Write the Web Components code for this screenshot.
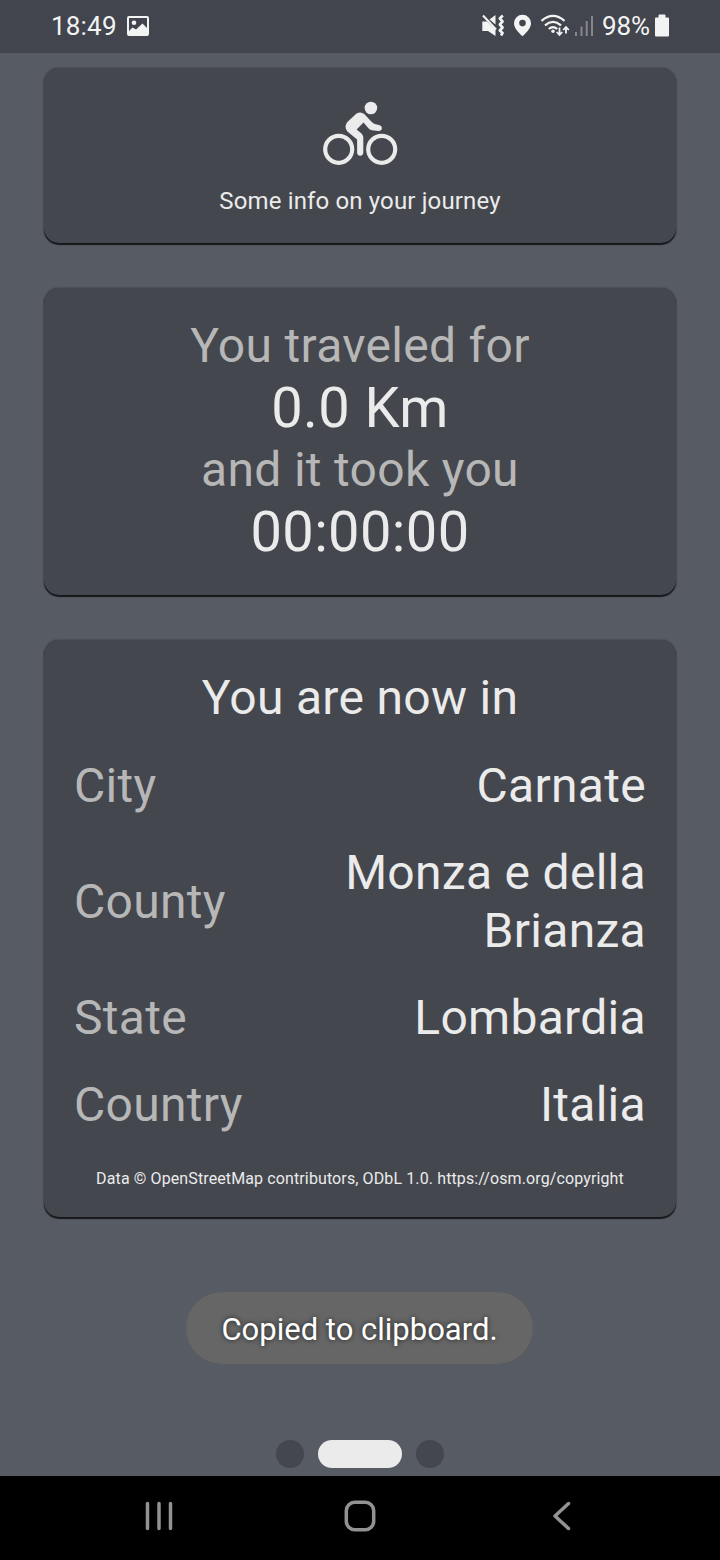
<!DOCTYPE html>
<html lang="en">
<head>
<meta charset="utf-8">
<title>Journey</title>
<style>
html,body{margin:0;height:100%;background:#575b63}
body{font-family:Roboto,sans-serif;color:#ebebeb}
</style>
</head>
<body>
<journey-app></journey-app>
<script>
const define = (name, html) => {
  const t = document.createElement('template');
  t.innerHTML = html;
  customElements.define(name, class extends HTMLElement {
    constructor() {
      super();
      this.attachShadow({mode: 'open'}).appendChild(t.content.cloneNode(true));
    }
  });
};

define('status-bar', `<style>
:host{display:flex;height:53px;background:#42454d;color:#f2f4f3;flex:none;box-sizing:border-box;padding:0 51px 0 51px;justify-content:space-between;font-size:26px;line-height:52px}
div{display:flex}
svg{display:block;flex:none}
.time{letter-spacing:.2px;width:76px}
.pct{font-size:26px;letter-spacing:-.1px;width:53px;margin-left:8px;white-space:nowrap}
</style>
<div><span class="time">18:49</span>
<svg width="23" height="53" viewBox="127 0 23 53" fill="#f2f4f3"><path fill-rule="evenodd" d="M129 16H147a2 2 0 0 1 2 2V34a2 2 0 0 1-2 2H129a2 2 0 0 1-2-2V18a2 2 0 0 1 2-2ZM129 18V31l3.500-3.500 3.500 2 6.500-6L147 28V18Z"/><circle cx="134" cy="22.800" r="2.300"/></svg></div>
<div>
<svg width="113" height="53" viewBox="481 0 113 53" fill="none" stroke="#f2f4f3">
<path fill="#f2f4f3" stroke="none" d="M482.300 21.500H487L495.500 30V36L488 31H482.300ZM495.500 15V24.500L489.500 19.500Z"/>
<path stroke-width="2" d="M483 15.500 496 29.500"/>
<path stroke-width="2.600" stroke-linejoin="round" d="M502.800 15.500 499.800 18.500 502.600 21.500 499.800 24.500 502.600 27.500 499.800 30.500 502.600 33 501 35.500"/>
<path fill="#f2f4f3" stroke="none" fill-rule="evenodd" d="M522.500 14.800a8.500 8.500 0 0 1 8.500 8.500c0 4.500-3.800 8.800-8.500 13-4.700-4.200-8.500-8.500-8.500-13a8.500 8.500 0 0 1 8.500-8.500Zm0 5a3.300 3.300 0 1 0 0 6.600 3.300 3.300 0 0 0 0-6.600Z"/>
<path stroke-width="2.300" d="M541.500 20.800Q553 11 564.500 20.800M545 25.300Q553 18.500 561 25.300M548.800 29Q553 25.300 557.200 29"/>
<circle cx="553" cy="31.300" r="1.700" fill="#f2f4f3" stroke="none"/>
<path stroke-width="1.800" d="M559.500 27.500V34.800M556.800 32l2.700 3 2.700-3M566 33.500V27.300M563.200 30l2.800-3 2.800 3"/>
<path stroke="#85878b" stroke-width="2" d="M576 32V36M581.500 26.500V36M586.700 21V36M592 16V36"/>
</svg><span class="pct">98%</span>
<svg width="14" height="53" viewBox="655 0 14 53" fill="#f2f4f3"><path d="M655 18.500a1 1 0 0 1 1-1H658.500V15.500a1 1 0 0 1 1-1H664.500a1 1 0 0 1 1 1V17.500H668a1 1 0 0 1 1 1V35.500a1 1 0 0 1-1 1H656a1 1 0 0 1-1-1Z"/></svg></div>`);

define('info-card', `<style>
:host{display:flex;flex-direction:column;box-sizing:border-box;flex:none;background:#44474e;border-radius:15px;box-shadow:0 1.500px 1px #15171a,0 0 2px #303338;padding:29px 30px 28px}
</style><slot></slot>`);

define('bike-icon', `<style>:host{display:block;width:76px;height:66px;align-self:center}svg{display:block}</style>
<svg width="76" height="66" viewBox="22 10 76 66" fill="#ebebeb"><g fill="none" stroke="#ebebeb" stroke-width="4.200"><circle cx="38.700" cy="59.300" r="13.500"/><circle cx="81.700" cy="59.300" r="13.500"/></g><circle cx="70.900" cy="18" r="6.300"/>
<path d="M56.500 23.600Q60.500 21 64.500 24.200L71.500 31.800Q73 33.800 75.500 34.200L79.300 34.900Q82 35.600 82 38.100Q81.600 41.100 78.500 41.100L72 40.300Q69.500 39.800 68 37.800L63.500 32.400L56.600 39.600L61.500 43.500Q63.300 45.500 63.300 48V62.600Q63.300 65.700 60.200 65.700Q57.100 65.700 57.100 62.600V49.500L47.400 41.400Q45.400 39.500 45.500 36.500Q45.700 34 47.400 32Z"/></svg>`);

define('place-row', `<style>
:host{display:flex;align-items:center;justify-content:space-between;padding:14.500px 0;font-size:48px;line-height:58px;letter-spacing:.3px}
.k{color:#b7b7b7}.v{text-align:right;width:310px}
</style><span class="k"><slot name="label"></slot></span><span class="v"><slot></slot></span>`);

define('toast-message', `<style>
:host{display:block;position:absolute;left:186px;top:1292px;width:347px;height:72px;border-radius:36px;background:#656665;color:#fff;font-size:31px;line-height:75px;text-align:center;text-shadow:0 0 5px rgba(0,0,0,.7);white-space:nowrap}
</style><slot></slot>`);

define('page-dots', `<style>
:host{display:flex;gap:14px;justify-content:center;margin-top:auto;padding-bottom:8px}
i{width:28px;height:28px;border-radius:14px;background:#44474e}.on{width:84px;background:#ebebeb}
</style><i></i><i class="on"></i><i></i>`);

define('nav-bar', `<style>:host{display:block;height:84px;background:#000;flex:none}svg{display:block}</style>
<svg width="720" height="84" viewBox="0 1476 720 84" fill="none" stroke="#929292" stroke-linecap="round" stroke-linejoin="round" stroke-width="3.500">
<path d="M147.500 1503.500V1528.500M159 1503.500V1528.500M170.500 1503.500V1528.500"/><path d="M568.500 1503.500 555 1516 568.500 1528.500"/>
<rect x="346.300" y="1502.300" width="27.400" height="27.400" rx="8.500"/></svg>`);

define('journey-app', `<style>
:host{display:flex;flex-direction:column;height:1560px;width:720px;position:relative;overflow:hidden;background:#575b63}
main{display:flex;flex-direction:column;gap:45px;padding:15px 44px 0}
p{margin:0;text-align:center;white-space:nowrap}
.hero{height:175px}
bike-icon{margin-top:3px}
.sub{font-size:24px;line-height:30px;margin-top:20px;letter-spacing:.14px}
.stats{height:307px}.place{height:577px}
.dim{color:#b7b7b7;font-size:48px;line-height:58px;letter-spacing:.3px}
.big{font-size:56px;line-height:66px;letter-spacing:.4px}
.title{font-size:48px;line-height:58px;margin-bottom:15px;letter-spacing:.3px}
.copy{font-size:16px;line-height:22px;margin-top:20px;letter-spacing:.115px}
</style>
<status-bar></status-bar>
<main>
<info-card class="hero"><bike-icon></bike-icon><p class="sub">Some info on your journey</p></info-card>
<info-card class="stats"><p class="dim">You traveled for</p><p class="big">0.0 Km</p><p class="dim">and it took you</p><p class="big">00:00:00</p></info-card>
<info-card class="place"><p class="title">You are now in</p>
<place-row><span slot="label">City</span>Carnate</place-row>
<place-row><span slot="label">County</span>Monza e della Brianza</place-row>
<place-row><span slot="label">State</span>Lombardia</place-row>
<place-row><span slot="label">Country</span>Italia</place-row>
<p class="copy">Data © OpenStreetMap contributors, ODbL 1.0. https://osm.org/copyright</p></info-card>
</main>
<page-dots></page-dots>
<nav-bar></nav-bar>
<toast-message>Copied to clipboard.</toast-message>`);
</script>
</body>
</html>
